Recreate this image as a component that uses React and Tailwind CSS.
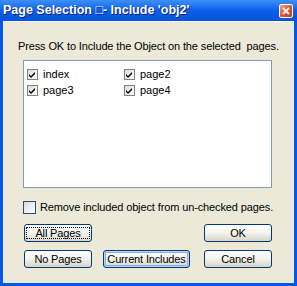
export default function App() {
  const font = { fontFamily: '"Liberation Sans", Arial, sans-serif' };
  const SmallCheck = () => (
    <span className="inline-flex h-[11px] w-[11px] items-center justify-center border border-[#808080] bg-gradient-to-br from-[#dcdcd7] to-white">
      <svg width="9" height="9" viewBox="0 0 9 9">
        <path d="M1 4 L3 6 L7 2 L7 4 L3 8 L1 6 Z" fill="#000" />
      </svg>
    </span>
  );
  const Item = ({ label }) => (
    <div className="flex h-[16px] items-center gap-[5px]">
      <SmallCheck />
      <span className="text-[11px] text-black">{label}</span>
    </div>
  );
  const Btn = ({ children, w, focus, def }) => (
    <div
      className={`flex h-[18px] items-center justify-center rounded-[3px] border border-[#003c74] bg-gradient-to-b from-white via-[#f3f3ee] to-[#d8d4c6] text-[11px] tracking-[-0.15px] text-black ${w} ${
        def ? "shadow-[inset_0_0_0_1px_#bcd4f6,inset_0_0_0_2px_#89ade4]" : ""
      }`}
    >
      {focus ? (
        <span className="flex h-[12px] w-[64px] items-center justify-center border border-dotted border-black">
          {children}
        </span>
      ) : (
        children
      )}
    </div>
  );
  return (
    <div className="h-[286px] w-[297px] overflow-hidden bg-[#0058e6]" style={font}>
      <div className="relative flex h-[21px] items-center bg-gradient-to-b from-[#3d8ff7] via-[#0a5fe9] to-[#0553dc] pl-[3px]">
        <span className="text-[12.5px] font-bold text-white [text-shadow:1px_1px_0_#0a1f80]">
          Page Selection □- Include 'obj2'
        </span>
        <div className="absolute right-[4px] top-[4px] flex h-[14px] w-[14px] items-center justify-center rounded-[2px] border border-white bg-gradient-to-br from-[#f0a080] via-[#e0552f] to-[#c83a15]">
          <svg width="8" height="8" viewBox="0 0 8 8">
            <path d="M1 1 L7 7 M7 1 L1 7" stroke="#fff" strokeWidth="1.8" />
          </svg>
        </div>
      </div>
      <div className="mx-[3px] flex h-[262px] flex-col bg-[#ece9d8] border-t border-[#f8f6ee]">
        <div className="ml-[15px] mt-[17px] h-[14px] text-[11px] leading-[14px] tracking-[-0.13px] text-black">
          Press OK to Include the Object on the selected&nbsp; pages.
        </div>
        <div className="ml-[20px] mt-[7px] flex h-[128px] w-[249px] border border-[#7f9db9] bg-white pl-[3px] pt-[5px]">
          <div className="flex w-[97px] flex-col">
            <Item label="index" />
            <Item label="page3" />
          </div>
          <div className="flex flex-col">
            <Item label="page2" />
            <Item label="page4" />
          </div>
        </div>
        <div className="ml-[20px] mt-[12px] flex h-[14px] items-center gap-[4px]">
          <span className="h-[13px] w-[13px] border border-[#1c5180] bg-gradient-to-br from-[#dcdcd7] to-white" />
          <span className="text-[11px] tracking-[-0.12px] text-black">Remove included object from un-checked pages.</span>
        </div>
        <div className="ml-[21px] mt-[10px] flex w-[248px] justify-between">
          <Btn w="w-[68px]" focus>All Pages</Btn>
          <Btn w="w-[68px]">OK</Btn>
        </div>
        <div className="ml-[21px] mt-[8px] flex w-[248px] items-center">
          <Btn w="w-[68px]">No Pages</Btn>
          <div className="ml-[11px]">
            <Btn w="w-[87px]" def>Current Includes</Btn>
          </div>
          <div className="ml-auto">
            <Btn w="w-[68px]">Cancel</Btn>
          </div>
        </div>
      </div>
    </div>
  );
}
